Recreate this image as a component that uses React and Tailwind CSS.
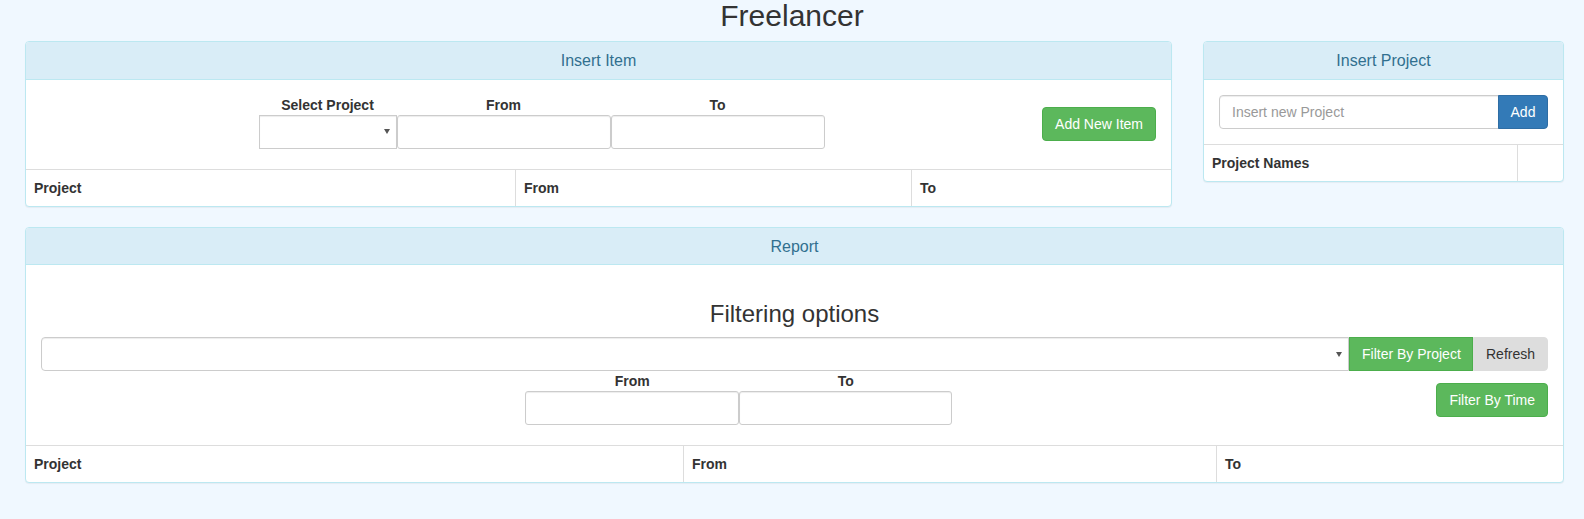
import React from 'react';

const font = "font-['Liberation_Sans',Arial,sans-serif]";

const Caret = () => (
  <svg width="6" height="5" viewBox="0 0 6 5" className="shrink-0">
    <polygon points="0,0 6,0 3,5" fill="#555" />
  </svg>
);

// fake select box (bootstrap form-control look)
const SelectBox = ({ className = '' }) => (
  <div
    className={`h-[34px] bg-white border border-[#ccc] shadow-[inset_0_1px_1px_rgba(0,0,0,0.075)] flex items-center justify-end pr-[6px] ${className}`}
  >
    <Caret />
  </div>
);

const TextInput = ({ className = '', placeholder = '' }) => (
  <input
    type="text"
    readOnly
    placeholder={placeholder}
    className={`h-[34px] bg-white border border-[#ccc] rounded-[3px] px-[12px] text-[14px] text-[#555] placeholder:text-[#999] shadow-[inset_0_1px_1px_rgba(0,0,0,0.075)] outline-none ${className}`}
  />
);

const Field = ({ label, children }) => (
  <div className="flex flex-col items-stretch">
    <div className="text-center font-bold leading-[20px] h-[20px]">{label}</div>
    {children}
  </div>
);

const GreenButton = ({ children, className = '' }) => (
  <button className={`h-[34px] px-[12px] bg-[#5cb85c] border border-[#4cae4c] text-white text-[14px] leading-[20px] whitespace-nowrap ${className}`}>
    {children}
  </button>
);

const Panel = ({ title, children, className = '' }) => (
  <div className={`bg-white border border-[#bce8f1] rounded-[4px] shadow-[0_1px_1px_rgba(0,0,0,0.05)] overflow-hidden ${className}`}>
    <div className="bg-[#d9edf7] border-b border-[#bce8f1] px-[15px] pt-[10px] pb-[9px] text-center text-[#31708f] text-[16px] leading-[17.6px]">
      {title}
    </div>
    {children}
  </div>
);

const HeadRow = ({ cols, template }) => (
  <div className={`grid border-t border-[#ddd] ${template}`}>
    {cols.map((c, i) => (
      <div
        key={i}
        className={`p-[8px] font-bold leading-[20px] h-[36px] ${i > 0 ? 'border-l border-[#ddd]' : ''}`}
      >
        {c}
      </div>
    ))}
  </div>
);

export default function App() {
  return (
    <div className={`min-h-[519px] bg-[#f0f8ff] text-[#333] text-[14px] leading-[20px] ${font}`}>
      <h1 className="text-center text-[30px] leading-[31px] h-[31px] mb-[10px] font-normal">Freelancer</h1>

      <div className="flex items-start gap-[31px] pl-[25px] pr-[20px]">
        {/* Insert Item */}
        <Panel title="Insert Item" className="w-[1147px]">
          <div className="flex px-[15px] pt-[15px] pb-[20px]">
            <div className="flex-1 flex justify-center">
              <Field label="Select Project">
                <SelectBox className="w-[138px]" />
              </Field>
              <Field label="From">
                <TextInput className="w-[214px]" />
              </Field>
              <Field label="To">
                <TextInput className="w-[214px]" />
              </Field>
            </div>
            <GreenButton className="mt-[12px] rounded-[4px]">Add New Item</GreenButton>
          </div>
          <HeadRow cols={['Project', 'From', 'To']} template="grid-cols-[489px_396px_1fr]" />
        </Panel>

        {/* Insert Project */}
        <Panel title="Insert Project" className="w-[361px]">
          <div className="flex p-[15px]">
            <TextInput className="flex-1 min-w-0 rounded-r-none rounded-l-[4px]" placeholder="Insert new Project" />
            <button className="h-[34px] w-[50px] bg-[#337ab7] border border-[#2e6da4] text-white rounded-r-[4px] -ml-px">
              Add
            </button>
          </div>
          <HeadRow cols={['Project Names', '']} template="grid-cols-[313px_1fr]" />
        </Panel>
      </div>

      {/* Report */}
      <div className="pl-[25px] pr-[20px] mt-[20px]">
        <Panel title="Report">
          <div className="px-[15px] pt-[15px] pb-[20px]">
            <h3 className="text-center text-[24px] leading-[26px] mt-[21px] mb-[10px] font-normal">Filtering options</h3>
            <div className="flex">
              <SelectBox className="flex-1 rounded-l-[4px]" />
              <GreenButton className="w-[124px] px-0">Filter By Project</GreenButton>
              <button className="h-[34px] w-[75px] bg-[#ddd] border border-[#ddd] text-[#333] rounded-r-[4px] whitespace-nowrap">
                Refresh
              </button>
            </div>
            <div className="flex">
              <div className="flex-1 flex justify-center">
                <Field label="From">
                  <TextInput className="w-[214px]" />
                </Field>
                <Field label="To">
                  <TextInput className="w-[213px]" />
                </Field>
              </div>
              <GreenButton className="mt-[12px] rounded-[4px]">Filter By Time</GreenButton>
            </div>
          </div>
          <HeadRow cols={['Project', 'From', 'To']} template="grid-cols-[657px_533px_1fr]" />
        </Panel>
      </div>
    </div>
  );
}
